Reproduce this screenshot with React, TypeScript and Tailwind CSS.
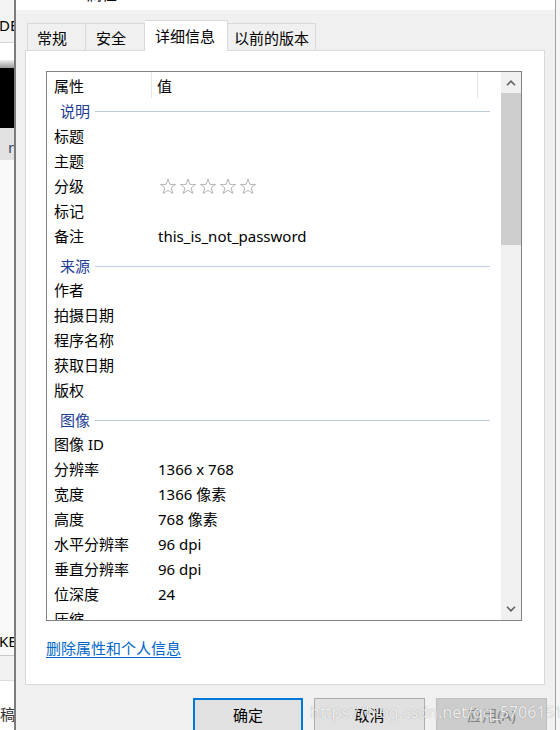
import React from "react";

const FONT = '"Noto Sans", "Noto Sans CJK SC", sans-serif';

type Row = { k: string; v?: string; stars?: boolean } | { group: string; first?: boolean };

const rows: Row[] = [
  { group: "说明", first: true },
  { k: "标题" },
  { k: "主题" },
  { k: "分级", stars: true },
  { k: "标记" },
  { k: "备注", v: "this_is_not_password" },
  { group: "来源" },
  { k: "作者" },
  { k: "拍摄日期" },
  { k: "程序名称" },
  { k: "获取日期" },
  { k: "版权" },
  { group: "图像" },
  { k: "图像 ID" },
  { k: "分辨率", v: "1366 x 768" },
  { k: "宽度", v: "1366 像素" },
  { k: "高度", v: "768 像素" },
  { k: "水平分辨率", v: "96 dpi" },
  { k: "垂直分辨率", v: "96 dpi" },
  { k: "位深度", v: "24" },
  { k: "压缩" },
];

function Star() {
  return (
    <svg width="18" height="17" viewBox="0 0 24 23" className="shrink-0">
      <path
        d="M12 1.5 L14.6 8.6 L22.2 8.8 L16.2 13.5 L18.4 20.9 L12 16.6 L5.6 20.9 L7.8 13.5 L1.8 8.8 L9.4 8.6 Z"
        fill="none"
        stroke="#b0b0b0"
        strokeWidth="1.3"
        strokeLinejoin="miter"
      />
    </svg>
  );
}

function Chevron({ up }: { up?: boolean }) {
  return (
    <svg width="10" height="6" viewBox="0 0 10 6">
      <path
        d={up ? "M1 5.2 L5 1.2 L9 5.2" : "M1 0.8 L5 4.8 L9 0.8"}
        fill="none"
        stroke="#606060"
        strokeWidth="1.6"
      />
    </svg>
  );
}

function ListRow({ r }: { r: Row }) {
  if ("group" in r) {
    return (
      <div
        className={
          r.first
            ? "h-[26px] shrink-0 flex items-center pl-[13px]"
            : "h-[29px] shrink-0 flex items-start pt-[6px] pl-[13px]"
        }
      >
        <div className="flex items-center w-full h-[23px]">
          <span className="text-[#1c3c96] leading-none">{r.group}</span>
          <div className="flex-1 h-px bg-[#bfcbdc] ml-[5px] mr-[11px]" />
        </div>
      </div>
    );
  }
  return (
    <div className="h-[25px] shrink-0 flex items-center text-black">
      <div className="w-[105px] shrink-0 pl-[7px] leading-none whitespace-nowrap">{r.k}</div>
      <div className="pl-[6px] leading-none whitespace-nowrap flex items-center">
        {r.stars ? (
          <div className="flex gap-[2px] pl-[1px]">
            <Star />
            <Star />
            <Star />
            <Star />
            <Star />
          </div>
        ) : (
          r.v
        )}
      </div>
    </div>
  );
}

export default function App() {
  return (
    <div
      className="w-[560px] h-[730px] flex overflow-hidden bg-white relative text-[15px]"
      style={{ fontFamily: FONT }}
    >
      {/* left background app strip */}
      <div className="w-[14px] shrink-0 flex flex-col overflow-hidden text-black">
        <div className="h-[42px] shrink-0 bg-[#f4f4f4] pt-[18px] leading-none whitespace-nowrap -ml-[1px]">DE</div>
        <div className="h-px shrink-0 bg-[#d6d6d6]" />
        <div className="h-[17px] shrink-0 bg-white" />
        <div className="h-[8px] shrink-0 bg-gradient-to-b from-[#f0f0f0] to-[#9a9a9a]" />
        <div className="h-[60px] shrink-0 bg-black" />
        <div className="h-[32px] shrink-0 bg-[#e2e2e2] pt-[12px] pl-[8px] leading-none text-[#3a4a6a]">n</div>
        <div className="h-[495px] shrink-0 bg-[#f9f9f9] flex flex-col justify-end pb-[6px]">
          <div className="leading-none whitespace-nowrap -ml-[1px]">KB</div>
        </div>
        <div className="h-px shrink-0 bg-[#c8c8c8]" />
        <div className="h-[24px] shrink-0 bg-[#f2f2f2]" />
        <div className="h-px shrink-0 bg-[#dcdcdc]" />
        <div className="flex-1 bg-white pt-[26px] leading-none whitespace-nowrap text-[#333]">稿</div>
      </div>
      <div className="w-[2px] shrink-0 bg-[#7c7c7c]" />

      {/* dialog */}
      <div className="w-[539px] shrink-0 flex flex-col">
        <div className="h-[10px] shrink-0 bg-white overflow-hidden">
          <div className="pl-[71px] -mt-[13px] text-[15px] text-black leading-none">属性</div>
        </div>
        <div className="flex-1 bg-[#f0f0f0] pl-[9px] pr-[10px] pt-[10px] flex flex-col">
          {/* tabs */}
          <div className="h-[30px] shrink-0 flex items-end pl-[2px] relative z-10">
            <div className="w-[59px] h-[27px] border border-b-0 border-[#d9d9d9] bg-[#f0f0f0] pl-[9px] pt-[4px] leading-[20px] text-black">
              常规
            </div>
            <div className="w-[59px] h-[27px] border border-b-0 border-l-0 border-[#d9d9d9] bg-[#f0f0f0] pl-[10px] pt-[4px] leading-[20px] text-black">
              安全
            </div>
            <div className="w-[83px] h-[31px] -mb-px border border-b-0 border-l-0 border-[#d9d9d9] bg-white pl-[10px] pt-[5px] leading-[20px] text-black">
              详细信息
            </div>
            <div className="w-[88px] h-[27px] border border-b-0 border-l-0 border-[#d9d9d9] bg-[#f0f0f0] pl-[6px] pt-[4px] leading-[20px] text-black">
              以前的版本
            </div>
          </div>

          {/* panel */}
          <div className="w-[520px] h-[635px] shrink-0 border border-[#d9d9d9] bg-white pt-[20px] pl-[20px] flex flex-col">
            <div className="w-[476px] h-[550px] shrink-0 border border-[#828282] flex overflow-hidden">
              <div className="flex-1 flex flex-col overflow-hidden">
                {/* header */}
                <div className="h-[26px] flex items-stretch text-black shrink-0">
                  <div className="w-[105px] pl-[7px] pt-[3px] flex items-center border-r border-[#e5e5e5]">属性</div>
                  <div className="w-[326px] pl-[5px] pt-[3px] flex items-center border-r border-[#e5e5e5]">值</div>
                </div>
                {rows.map((r, i) => (
                  <ListRow key={i} r={r} />
                ))}
              </div>
              {/* scrollbar */}
              <div className="w-[20px] bg-[#f0f0f0] flex flex-col shrink-0">
                <div className="h-[21px] shrink-0 flex items-center justify-center">
                  <Chevron up />
                </div>
                <div className="h-[152px] shrink-0 bg-[#cdcdcd]" />
                <div className="flex-1" />
                <div className="h-[21px] shrink-0 flex items-center justify-center pb-[2px]">
                  <Chevron />
                </div>
              </div>
            </div>
            <div className="mt-[17px] leading-[20px] text-[#0066cc] underline underline-offset-[3px] decoration-[#0066cc]">
              删除属性和个人信息
            </div>
          </div>

          {/* buttons */}
          <div className="mt-[13px] shrink-0 flex justify-end -mr-[2px] gap-[11px]">
            <div className="w-[110px] h-[34px] border-2 border-[#0078d7] bg-[#e1e1e1] flex items-center justify-center text-black pt-[1px]">
              确定
            </div>
            <div className="w-[111px] h-[34px] border border-[#adadad] bg-[#e1e1e1] flex items-center justify-center text-black">
              取消
            </div>
            <div className="w-[111px] h-[34px] border border-[#bfbfbf] bg-[#cccccc] flex items-center justify-center text-[#838383]">
              应用(A)
            </div>
          </div>
        </div>
      </div>
      <div className="w-px shrink-0 bg-[#a0a0a0]" />
      <div className="flex-1 bg-[#f6f6f6]" />

      {/* watermark */}
      <div className="absolute left-[310px] top-[702px] text-[16px] leading-[20px] text-white/85 whitespace-nowrap [text-shadow:0_0_1px_rgba(0,0,0,0.4)]">
        https://blog.csdn.net/qq_57061511
      </div>
    </div>
  );
}
